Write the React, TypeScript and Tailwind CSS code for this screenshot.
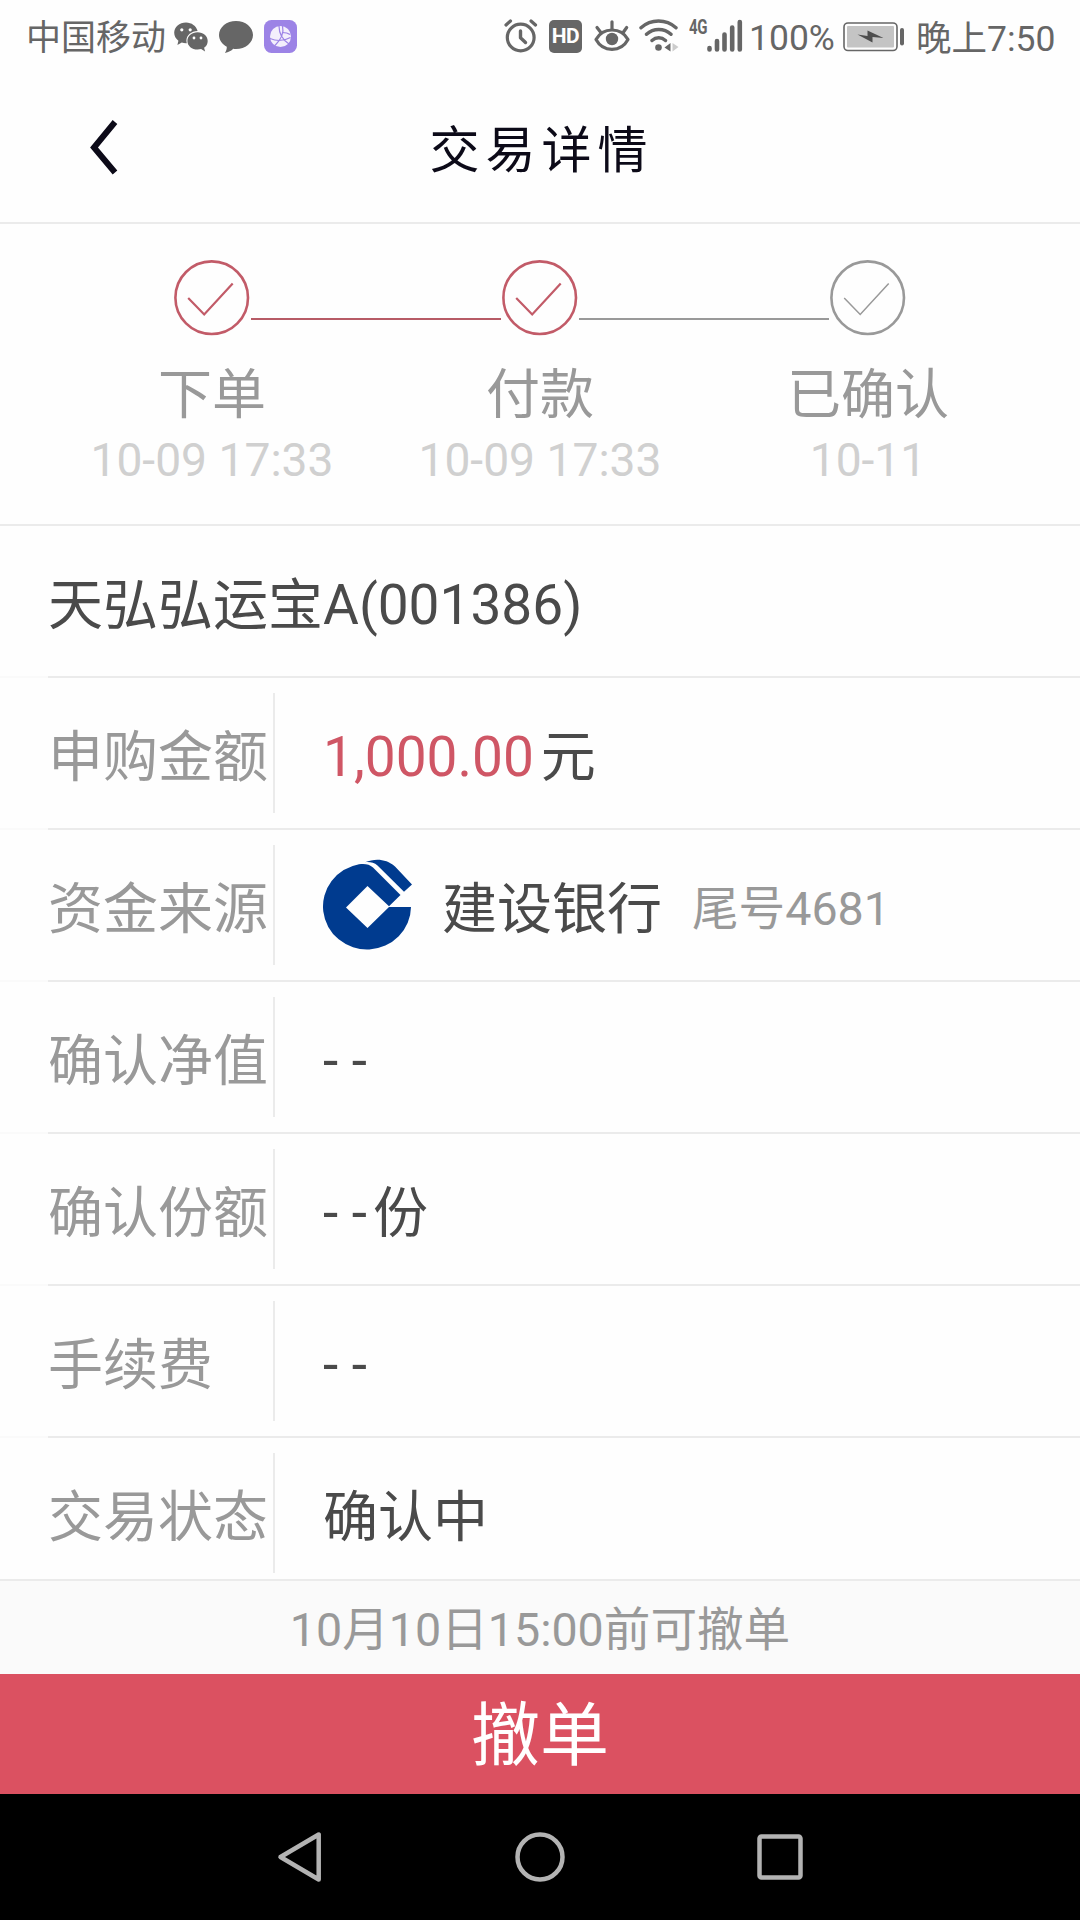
import type { ReactNode } from "react";

const Wechat = () => (
  <svg width="34" height="30" viewBox="0 0 34 30" fill="#666">
    <path d="M12 0.5C5.400.5.2 5 .2 10.800c0 3.200 1.600 6 4.200 7.900L3.400 23l4.400-2.400c1.300.4 2.700.6 4.200.6h.8a9 9 0 0 1-.4-2.600c0-5.400 5-9.400 11.200-9.600C22.300 4 17.600.5 12 .5Z" />
    <path d="M23.600 10.200c-5.700 0-10.200 3.900-10.200 8.700s4.500 8.700 10.200 8.700c1.200 0 2.400-.2 3.500-.5l4 2.300-1-3.600c2.300-1.600 3.600-4.100 3.600-6.900 0-4.800-4.400-8.700-10.100-8.700Z" />
    <circle cx="7.800" cy="7.800" r="1.600" fill="#fefefe" />
    <circle cx="16.200" cy="7.800" r="1.600" fill="#fefefe" />
    <circle cx="20" cy="16" r="1.400" fill="#fefefe" />
    <circle cx="27" cy="16" r="1.400" fill="#fefefe" />
  </svg>
);

const Bubble = () => (
  <svg width="34" height="32" viewBox="0 0 34 32" fill="#666">
    <path d="M17 0C7.600 0 0 6.200 0 14c0 5 3.100 9.200 7.800 11.700.1 2-.6 4.300-1.900 6.200 3.700-.6 6.500-2 8.300-4.100.9.100 1.900.2 2.800.2 9.400 0 17-6.200 17-14S26.400 0 17 0Z" />
  </svg>
);

const Globe = () => (
  <svg width="33" height="33" viewBox="0 0 33 33" fill="none">
    <rect width="33" height="33" rx="7.500" fill="#9c83e6" />
    <circle cx="16.500" cy="16.500" r="10.500" fill="#f3effc" />
    <g stroke="#9c83e6" strokeWidth="1.200">
      <path d="M15 6c0 7 4 14 10 18M18.500 6c1.500 6-1 13-7.500 19.500M6 18.500c7 3 14 2.500 20.500-1M18 12.500c3 0 6 .5 8 2" />
    </g>
  </svg>
);

const Alarm = () => (
  <svg width="34" height="34" viewBox="0 0 34 34" fill="none" stroke="#666" strokeLinecap="round">
    <circle cx="16.700" cy="18.500" r="13.400" strokeWidth="3.200" />
    <path d="M16.500 12v6.800l5 4.700" strokeWidth="3.400" strokeLinejoin="round" />
    <path d="M2 6l4.500-4M31.500 6 27 2" strokeWidth="3.200" />
  </svg>
);

const Eye = () => (
  <svg width="36" height="32" viewBox="0 0 36 32" fill="none" stroke="#666" strokeWidth="3.200" strokeLinecap="round" strokeLinejoin="round">
    <path d="M2 19.500C5.500 13.200 11.300 10 18 10s12.500 3.200 16 9.500C30.500 26 24.700 29.300 18 29.300S5.500 26 2 19.500Z" />
    <circle cx="18" cy="19" r="6.200" fill="#666" stroke="none" />
    <path d="M18 1.800V9M3 7.500l3.500 4.500M32.700 7.500 29.500 12" />
  </svg>
);

const Wifi = () => (
  <svg width="40" height="33" viewBox="0 0 40 33" fill="none" stroke="#666" strokeWidth="3.400" strokeLinecap="round">
    <path d="M2 8.800c10-9 25-9 35 0M7.500 15.300c7-6.400 17.500-6.400 24.500 0M13 21.500c4-3.600 9.500-3.600 13.500 0" />
    <circle cx="19.500" cy="28.500" r="3.300" fill="#666" stroke="none" />
    <path d="M31.500 24v8.500L25.500 28.500Z" fill="#666" stroke="none" />
    <path d="M33.500 24v8.500l6-4.500Z" fill="#ccc" stroke="none" />
  </svg>
);

const Signal = () => (
  <svg width="36" height="34" viewBox="0 0 36 34" stroke="#666" strokeWidth="4.600" strokeLinecap="round">
    <path d="M2.500 29v1.500M10 22v8.500M17.500 15.500v15M25.200 8.500v22M32.800 3v27.500" />
  </svg>
);

const Battery = () => (
  <svg width="62" height="30" viewBox="0 0 62 30" fill="none">
    <rect x="1" y="1" width="53" height="27.500" rx="4" stroke="#666" strokeWidth="1.600" />
    <rect x="4" y="4" width="47" height="21.500" rx="1" fill="#c4c4c4" />
    <path d="m14.500 12.500 10 1.500V8.500L40.500 16l-11-1v5.500Z" fill="#4d4d4d" />
    <rect x="57" y="6" width="4" height="17.500" rx="2" fill="#666" />
  </svg>
);

const Check = ({ color, thin }: { color: string; thin?: boolean }) => (
  <svg width="78" height="78" viewBox="0 0 78 78" fill="none" stroke={color}>
    <circle cx="38.700" cy="38.700" r="36.300" strokeWidth="2.600" />
    <path d="m15.200 39 16 16.500L59.700 24.500" strokeWidth={thin ? 1.500 : 2.200} />
  </svg>
);

const BankLogo = () => (
  <svg width="90" height="92" viewBox="0 0 90 92" fill="#003b8f">
    <path
      fillRule="evenodd"
      d="M88 48A44 43 0 1 1 36 5.200c5.500-.8 10.500-.2 14 3.300L77.500 36 66 47.300 44.500 27 23 48.500 44.500 69 66 48Z"
    />
    <path d="M42 3.200C52-.7 63-.5 72 7.500L89 25.500 81 32.800 54.500 6.500C51 3.500 47 2.800 42 3.200Z" />
  </svg>
);

function StatusBar() {
  return (
    <div className="flex h-[72px] items-start pl-[26px] text-[35.500px] leading-[36px] text-[#666]">
      <span className="mt-[21px] w-[148px] text-[35px] whitespace-nowrap">中国移动</span>
      <span className="mt-[22px] w-[45px]"><Wechat /></span>
      <span className="mt-[21px] w-[45px]"><Bubble /></span>
      <span className="mt-[20px] w-[240px]"><Globe /></span>
      <span className="mt-[19px] w-[45px]"><Alarm /></span>
      <span className="mt-[20px] mr-[12px] flex h-[33px] w-[33px] items-center justify-center rounded-[5px] bg-[#666] text-[21px] font-bold leading-none tracking-[-0.500px] text-[#fefefe]">HD</span>
      <span className="mt-[20px] w-[45px]"><Eye /></span>
      <span className="mt-[19px] w-[50px]"><Wifi /></span>
      <span className="mt-[17px] w-[18px] origin-left scale-x-75 text-[20px] font-bold leading-[20px] tracking-[-0.500px]">4G</span>
      <span className="mt-[19px] w-[42px]"><Signal /></span>
      <span className="mt-[20px] w-[94px] whitespace-nowrap">100%</span>
      <span className="mt-[22px] w-[73px]"><Battery /></span>
      <span className="mt-[21px] whitespace-nowrap">晚上7:50</span>
    </div>
  );
}

function Header() {
  return (
    <header className="grid h-[152px] grid-cols-[120px_1fr_120px] items-center border-b-2 border-[#ebebeb] text-[#0c0a18]">
      <svg className="ml-[89px]" width="30" height="56" viewBox="0 0 30 56" fill="none" stroke="currentColor" strokeWidth="6">
        <path d="M26 3 5 28.500l21 25" />
      </svg>
      <h1 className="pt-[8px] pl-[3px] text-center text-[50px] leading-[60px] tracking-[6px]">交易详情</h1>
    </header>
  );
}

const steps = [
  { name: "下单", time: "10-09 17:33", done: true },
  { name: "付款", time: "10-09 17:33", done: true },
  { name: "已确认", time: "10-11", done: false },
];

function Steps() {
  return (
    <section className="h-[302px] border-b-2 border-[#ebebeb] px-[48px] pt-[35px]">
      <div className="flex justify-center">
        <Check color="#c25b68" />
        <div className="mt-[59px] h-[2px] w-[250px] bg-[#b75b66]" />
        <Check color="#c25b68" />
        <div className="mt-[59px] h-[2px] w-[250px] bg-[#999]" />
        <Check color="#999" thin />
      </div>
      <div className="grid grid-cols-3">
        {steps.map((s) => (
          <div key={s.name} className="text-center">
            <div className="mt-[27px] h-[64px] text-[54px] leading-[64px] text-[#999]">{s.name}</div>
            <div className="mt-[5px] text-[46.200px] leading-[54px] text-[#d0d0d0]">{s.time}</div>
          </div>
        ))}
      </div>
    </section>
  );
}

function Divider() {
  return (
    <div className="flex h-[2px]">
      <div className="w-[48px] bg-[#fafafa]" />
      <div className="flex-1 bg-[#ebebeb]" />
    </div>
  );
}

function Row({ label, children }: { label: string; children: ReactNode }) {
  return (
    <>
      <Divider />
      <div className="flex h-[150px] items-center pl-[48px]">
        <div className="flex h-[120px] w-[227px] items-center border-r-2 border-[#ebebeb] pt-[8px] whitespace-nowrap text-[#999]">
          {label}
        </div>
        <div className="flex items-center pl-[48px]">{children}</div>
      </div>
    </>
  );
}

export default function App() {
  return (
    <div className="flex h-[1920px] w-[1080px] flex-col overflow-hidden bg-[#fefefe] font-[Roboto,'Noto_Sans_CJK_SC',sans-serif]">
      <StatusBar />
      <Header />
      <Steps />
      <main className="h-[1053px] overflow-hidden text-[55px] leading-[66px] text-[#4a4a4a]">
        <div className="flex h-[150px] items-center pt-[7px] pl-[48px]">天弘弘运宝A(001386)</div>
        <Row label="申购金额">
          <span className="pt-[8px] text-[#cf5665]">1,000.00</span>
          <span className="ml-[7px] pt-[8px]">元</span>
        </Row>
        <Row label="资金来源">
          <BankLogo />
          <span className="ml-[29px] pt-[8px]">建设银行</span>
          <span className="ml-[30px] pt-[8px] text-[46.600px] text-[#999]">尾号4681</span>
        </Row>
        <Row label="确认净值"><span className="pt-[7px]">- -</span></Row>
        <Row label="确认份额">
          <span className="pt-[7px]">- -</span>
          <span className="ml-[6px] pt-[8px]">份</span>
        </Row>
        <Row label="手续费"><span className="pt-[7px]">- -</span></Row>
        <Row label="交易状态"><span className="pt-[8px]">确认中</span></Row>
      </main>
      <div className="flex h-[95px] items-center justify-center border-t-2 border-[#ebebeb] bg-[#fafafa] pt-[4px] text-[46.600px] leading-[56px] text-[#999]">
        10月10日15:00前可撤单
      </div>
      <button className="h-[120px] bg-[#db5161] pt-[5px] text-center text-[69px] leading-[115px] text-white">撤单</button>
      <nav className="flex h-[126px] items-center justify-center gap-[190px] bg-black">
        <svg width="50" height="52" viewBox="0 0 50 52" fill="none" stroke="#b3b3b3" strokeWidth="4.500" strokeLinejoin="round">
          <path d="M5.500 26 43.700 3.500v45Z" />
        </svg>
        <svg width="50" height="50" viewBox="0 0 50 50" fill="none" stroke="#b3b3b3" strokeWidth="4.500">
          <circle cx="25" cy="25" r="22.500" />
        </svg>
        <svg width="50" height="50" viewBox="0 0 50 50" fill="none" stroke="#b3b3b3" strokeWidth="4.500">
          <rect x="4.500" y="4.500" width="41" height="41" rx="2" />
        </svg>
      </nav>
    </div>
  );
}
